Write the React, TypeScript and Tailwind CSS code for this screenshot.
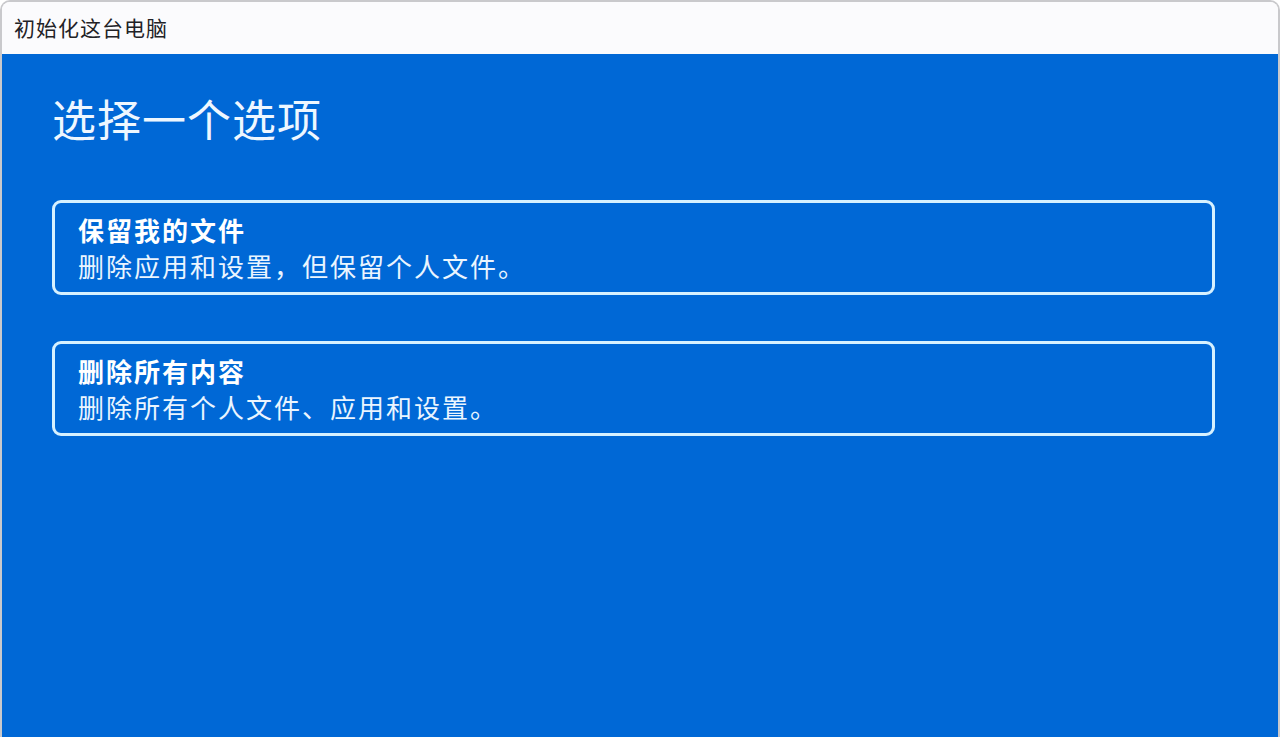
import React from "react";

const font = { fontFamily: '"Noto Sans CJK SC", "Noto Sans", sans-serif' };

function Option({ title, desc }: { title: string; desc: string }) {
  return (
    <div className="rounded-[9px] border-[3px] border-[#d6f1ff] px-[23px] pt-[8px] pb-[8px] text-white">
      <div className="text-[26px] font-bold leading-[37px] tracking-[2px]">{title}</div>
      <div className="text-[26px] leading-[36px] tracking-[2px] text-[#eaf5ff]">{desc}</div>
    </div>
  );
}

export default function App() {
  return (
    <div className="h-[737px] w-[1280px] overflow-hidden bg-white" style={font}>
      <div className="flex h-full flex-col overflow-hidden rounded-t-[10px] border-l-[2px] border-r-[2px] border-t-[2px] border-[#c9c9cc]">
        <div className="flex h-[52px] items-center bg-[#fbfbfd] pl-[12px] text-[21px] tracking-[1px] text-[#222226]">
          初始化这台电脑
        </div>
        <div className="flex flex-1 flex-col bg-[#0068d6] pl-[50px] pr-[63px]">
          <h1 className="mt-[36px] text-[44px] font-normal leading-[56px] tracking-[1px] text-[#eef7ff]">选择一个选项</h1>
          <div className="mt-[54px] flex flex-col gap-[46px]">
            <Option title="保留我的文件" desc="删除应用和设置，但保留个人文件。" />
            <Option title="删除所有内容" desc="删除所有个人文件、应用和设置。" />
          </div>
        </div>
      </div>
    </div>
  );
}
